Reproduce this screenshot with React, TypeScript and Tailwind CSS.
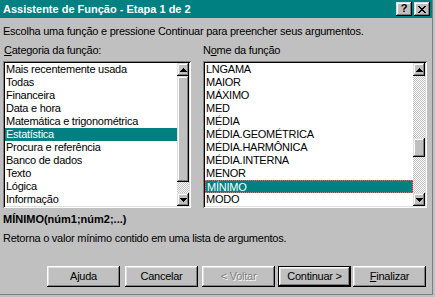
import React from "react";

const raised =
  "shadow-[inset_-1px_-1px_0_#000,inset_1px_1px_0_#dfdfdf,inset_-2px_-2px_0_#808080,inset_2px_2px_0_#fff]";
const btnRaised =
  "shadow-[inset_-1px_-1px_0_#000,inset_1px_1px_0_#fff,inset_-2px_-2px_0_#808080,inset_2px_2px_0_#dfdfdf]";
const sunken =
  "shadow-[inset_1px_1px_0_#808080,inset_-1px_-1px_0_#fff,inset_2px_2px_0_#000,inset_-2px_-2px_0_#dfdfdf]";
const dither =
  "bg-[repeating-conic-gradient(#c0c0c0_0%_25%,#ffffff_0%_50%)] bg-[length:2px_2px]";

function Arrow({ up }: { up: boolean }) {
  const d = up
    ? "M3 0h1v1h-1zM2 1h3v1h-3zM1 2h5v1h-5zM0 3h7v1h-7z"
    : "M0 0h7v1h-7zM1 1h5v1h-5zM2 2h3v1h-3zM3 3h1v1h-1z";
  return (
    <svg width="7" height="4" viewBox="0 0 7 4" shapeRendering="crispEdges">
      <path d={d} fill="#000" />
    </svg>
  );
}

function ScrollBar({ thumbTop, thumb }: { thumbTop: string; thumb: string }) {
  return (
    <div className="flex flex-col w-[12px] h-full">
      <div className={`h-[13px] bg-[#c0c0c0] ${raised} flex items-center justify-center`}>
        <Arrow up />
      </div>
      <div className={`flex-1 flex flex-col ${dither}`}>
        <div className={thumbTop} />
        <div className={`${thumb} bg-[#c0c0c0] ${raised}`} />
      </div>
      <div className={`h-[13px] bg-[#c0c0c0] ${raised} flex items-center justify-center`}>
        <Arrow up={false} />
      </div>
    </div>
  );
}

function ListBox({
  items,
  selected,
  width,
  thumbTop,
  thumb,
  focus,
}: {
  items: string[];
  selected: number;
  width: string;
  thumbTop: string;
  thumb: string;
  focus?: boolean;
}) {
  return (
    <div className={`${width} h-[147px] bg-white p-[2px] ${sunken} flex`}>
      <div className="flex-1 flex flex-col overflow-hidden">
        {items.map((it, i) => (
          <div
            key={it}
            className={`h-[13px] leading-[13px] pl-[1px] whitespace-nowrap ${
              i === selected
                ? `bg-[#008080] text-white ${focus ? "border border-dotted border-[#ff6060] pl-0 leading-[11px]" : ""}`
                : "text-black"
            }`}
          >
            {it}
          </div>
        ))}
      </div>
      <ScrollBar thumbTop={thumbTop} thumb={thumb} />
    </div>
  );
}

function Btn({
  children,
  cls,
  isDefault,
  disabled,
}: {
  children: React.ReactNode;
  cls: string;
  isDefault?: boolean;
  disabled?: boolean;
}) {
  if (isDefault) {
    return (
      <div className={`${cls} w-[73px] h-[21px] border border-black`}>
        <div className={`w-full h-full bg-[#c0c0c0] ${btnRaised} flex items-center justify-center`}>
          {children}
        </div>
      </div>
    );
  }
  return (
    <div
      className={`${cls} w-[73px] h-[21px] bg-[#c0c0c0] ${btnRaised} flex items-center justify-center ${
        disabled ? "text-[#808080] [text-shadow:1px_1px_0_#fff]" : ""
      }`}
    >
      {children}
    </div>
  );
}

export default function App() {
  const cats = [
    "Mais recentemente usada",
    "Todas",
    "Financeira",
    "Data e hora",
    "Matemática e trigonométrica",
    "Estatística",
    "Procura e referência",
    "Banco de dados",
    "Texto",
    "Lógica",
    "Informação",
  ];
  const funcs = [
    "LNGAMA",
    "MAIOR",
    "MÁXIMO",
    "MED",
    "MÉDIA",
    "MÉDIA.GEOMÉTRICA",
    "MÉDIA.HARMÔNICA",
    "MÉDIA.INTERNA",
    "MENOR",
    "MÍNIMO",
    "MODO",
  ];
  return (
    <div
      className="w-[435px] h-[297px] bg-[#c0c0c0] overflow-hidden text-[11px] tracking-[-0.25px] text-black font-['Liberation_Sans',Arial,sans-serif] shadow-[inset_-2px_-2px_0_#c0c0c0,inset_-3px_-3px_0_#808080]"
    >
      <div className="w-[432px] flex flex-col">
        <div className="h-[18px] bg-[#008080] flex items-center justify-between pl-[3px] pr-[2px]">
          <span className="text-white font-bold text-[11px] tracking-normal">
            Assistente de Função - Etapa 1 de 2
          </span>
          <div className="flex gap-[2px]">
            <div className={`w-[16px] h-[14px] bg-[#c0c0c0] ${raised} flex items-center justify-center font-bold text-[11px] leading-none tracking-normal pb-[1px]`}>
              ?
            </div>
            <div className={`w-[16px] h-[14px] bg-[#c0c0c0] ${raised} flex items-center justify-center`}>
              <svg width="8" height="7" viewBox="0 0 8 7" shapeRendering="crispEdges">
                <path
                  d="M0 0h2v1h-2zM6 0h2v1h-2zM1 1h2v1h-2zM5 1h2v1h-2zM2 2h4v1h-4zM3 3h2v1h-2zM2 4h4v1h-4zM1 5h2v1h-2zM5 5h2v1h-2zM0 6h2v1h-2zM6 6h2v1h-2z"
                  fill="#000"
                />
              </svg>
            </div>
          </div>
        </div>
        <div className="flex flex-col px-[3px]">
          <div className="mt-[7px] h-[13px] leading-[13px] whitespace-nowrap">
            Escolha uma função e pressione Continuar para preencher seus argumentos.
          </div>
          <div className="mt-[6px] h-[13px] leading-[13px] flex pl-[1px]">
            <span className="w-[199px]">
              <u>C</u>ategoria da função:
            </span>
            <span>
              N<u>o</u>me da função
            </span>
          </div>
          <div className="mt-[4px] flex gap-[12px]">
            <ListBox
              items={cats}
              selected={5}
              width="w-[188px]"
              thumbTop="h-0"
              thumb="h-[106px]"
            />
            <ListBox
              items={funcs}
              selected={9}
              width="w-[224px]"
              thumbTop="h-[62px]"
              thumb="h-[19px]"
              focus
            />
          </div>
          <div className="mt-[5px] h-[13px] leading-[13px] font-bold tracking-normal">
            MÍNIMO(núm1;núm2;...)
          </div>
          <div className="mt-[6px] h-[13px] leading-[13px] whitespace-nowrap">
            Retorna o valor mínimo contido em uma lista de argumentos.
          </div>
          <div className="mt-[21px] flex">
            <Btn cls="ml-[44px]">
              A<u>j</u>uda
            </Btn>
            <Btn cls="ml-[5px]">Cancelar</Btn>
            <Btn cls="ml-[4px]" disabled>
              &lt; Voltar
            </Btn>
            <Btn cls="ml-[3px]" isDefault>
              Continuar &gt;
            </Btn>
            <Btn cls="ml-[2px]">
              <u>F</u>inalizar
            </Btn>
          </div>
        </div>
      </div>
    </div>
  );
}
